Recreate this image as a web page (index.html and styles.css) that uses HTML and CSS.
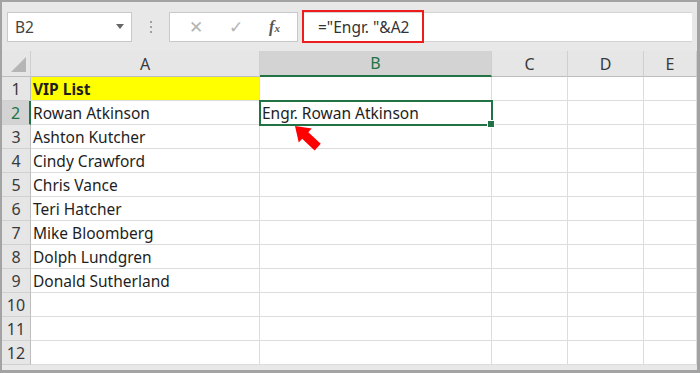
FILE: index.html
```html
<!DOCTYPE html>
<html lang="en">

<head>
    <meta charset="UTF-8">
    <title>VIP List</title>
    <link rel="stylesheet" href="styles.css">
</head>

<body>
    <div class="frame">
        <div class="toolbar">
            <div class="namebox">
                <span>B2</span>
                <span class="drop"></span>
            </div>
            <div class="dots"><i></i><i></i><i></i></div>
            <div class="buttons">
                <span class="btn">&#x2715;</span>
                <span class="btn">&#x2713;</span>
                <span class="btn fx">f<sub>x</sub></span>
            </div>
            <div class="formula">
                <span class="mark">="Engr. "&amp;A2</span>
            </div>
        </div>

        <div class="sheet">
            <div class="hd corner"><span class="tri"></span></div>
            <div class="hd">A</div>
            <div class="hd on-col">B</div>
            <div class="hd">C</div>
            <div class="hd">D</div>
            <div class="hd">E</div>

            <div class="rh">1</div>
            <div class="c yellow"><b>VIP List</b></div>
            <div class="c"></div><div class="c"></div><div class="c"></div><div class="c"></div>

            <div class="rh on-row">2</div>
            <div class="c">Rowan Atkinson</div>
            <div class="c sel">Engr. Rowan Atkinson<span class="handle"></span></div>
            <div class="c"></div><div class="c"></div><div class="c"></div>

            <div class="rh">3</div>
            <div class="c">Ashton Kutcher</div>
            <div class="c"></div><div class="c"></div><div class="c"></div><div class="c"></div>

            <div class="rh">4</div>
            <div class="c">Cindy Crawford</div>
            <div class="c"></div><div class="c"></div><div class="c"></div><div class="c"></div>

            <div class="rh">5</div>
            <div class="c">Chris Vance</div>
            <div class="c"></div><div class="c"></div><div class="c"></div><div class="c"></div>

            <div class="rh">6</div>
            <div class="c">Teri Hatcher</div>
            <div class="c"></div><div class="c"></div><div class="c"></div><div class="c"></div>

            <div class="rh">7</div>
            <div class="c">Mike Bloomberg</div>
            <div class="c"></div><div class="c"></div><div class="c"></div><div class="c"></div>

            <div class="rh">8</div>
            <div class="c">Dolph Lundgren</div>
            <div class="c"></div><div class="c"></div><div class="c"></div><div class="c"></div>

            <div class="rh">9</div>
            <div class="c">Donald Sutherland</div>
            <div class="c"></div><div class="c"></div><div class="c"></div><div class="c"></div>

            <div class="rh">10</div>
            <div class="c"></div><div class="c"></div><div class="c"></div><div class="c"></div><div class="c"></div>

            <div class="rh">11</div>
            <div class="c"></div><div class="c"></div><div class="c"></div><div class="c"></div><div class="c"></div>

            <div class="rh">12</div>
            <div class="c"></div><div class="c"></div><div class="c"></div><div class="c"></div><div class="c"></div>

            <!-- red pointer over B2 -->
            <svg class="arrow" width="40" height="40" viewBox="0 0 40 40">
                <polygon transform="translate(5,3) rotate(223)"
                    points="-31,-4.5 -14,-4.5 -14,-9.5 0,0 -14,9.5 -14,4.5 -31,4.5" fill="#ff0000" />
            </svg>
        </div>
    </div>
</body>

</html>
```

FILE: styles.css
```css
body {
    margin: 0;
    font-family: "Noto Sans", "Open Sans", sans-serif;
    color: #222;
}

.frame {
    width: 700px;
    height: 373px;
    box-sizing: border-box;
    border: 2px solid #a3a3a3;
    border-right-width: 3px;
    border-bottom-width: 3px;
    overflow: hidden;
    background: #e8e8e8;
}

/* formula bar */
.toolbar {
    height: 49px;
    display: flex;
    align-items: center;
    padding-left: 5px;
    box-sizing: border-box;
}

.namebox {
    width: 125px;
    height: 30px;
    box-sizing: border-box;
    background: #fff;
    border: 1px solid #c9c9c9;
    display: flex;
    align-items: center;
    justify-content: space-between;
    padding: 0 7px 0 7px;
    font-size: 15.5px;
    color: #444;
}

.drop {
    width: 0;
    height: 0;
    border-left: 4px solid transparent;
    border-right: 4px solid transparent;
    border-top: 5px solid #666;
}

.dots {
    width: 37px;
    display: flex;
    flex-direction: column;
    align-items: center;
    gap: 3px;
}

.dots i {
    width: 2px;
    height: 2px;
    background: #a0a0a0;
}

.buttons {
    width: 129px;
    height: 30px;
    box-sizing: border-box;
    background: #fff;
    border: 1px solid #c9c9c9;
    display: flex;
    align-items: center;
    justify-content: space-around;
    padding: 0 4px 0 6px;
    font-size: 17px;
    color: #b4b4b4;
}

.fx {
    font-family: "Liberation Serif", serif;
    font-style: italic;
    font-weight: bold;
    font-size: 16px;
    color: #555;
}

.fx sub {
    font-size: 11px;
    vertical-align: 0;
}

.formula {
    flex: 1;
    height: 30px;
    margin-left: 4px;
    margin-right: 5px;
    background: #fff;
    border-top: 1px solid #d4d4d4;
    border-bottom: 1px solid #d4d4d4;
    box-sizing: border-box;
    display: flex;
    align-items: center;
}

.mark {
    height: 33px;
    box-sizing: border-box;
    border: 2px solid #ee1c1c;
    padding: 0 13px 0 14px;
    display: flex;
    align-items: center;
    font-size: 15.5px;
    color: #333;
}

/* grid */
.sheet {
    position: relative;
    display: grid;
    grid-template-columns: 29px 229px 232px 76px 76px 1fr;
    grid-template-rows: 26px;
    grid-auto-rows: 24px;
    background: #fff;
    font-size: 15.5px;
}

.sheet > div {
    box-sizing: border-box;
    border-right: 1px solid #dcdcdc;
    border-bottom: 1px solid #dcdcdc;
}

.hd {
    background: #e6e6e6;
    color: #3a3a3a;
    font-size: 16px;
    display: flex;
    align-items: center;
    justify-content: center;
    border-right-color: #cfcfcf !important;
    border-bottom-color: #bdbdbd !important;
}

.corner {
    position: relative;
}

.tri {
    position: absolute;
    right: 4px;
    bottom: 4px;
    width: 0;
    height: 0;
    border-left: 15px solid transparent;
    border-bottom: 15px solid #b5b5b5;
}

.on-col {
    background: #d3d3d3;
    color: #217346;
    border-bottom: 2px solid #217346 !important;
}

.rh {
    background: #e6e6e6;
    color: #3a3a3a;
    font-size: 16px;
    display: flex;
    align-items: center;
    justify-content: center;
    border-right-color: #bdbdbd !important;
    border-bottom-color: #d0d0d0 !important;
}

.on-row {
    background: #d3d3d3;
    color: #217346;
    border-right: 2px solid #217346 !important;
}

.c {
    display: flex;
    align-items: center;
    padding-left: 2px;
    white-space: nowrap;
    color: #1e1e1e;
}

.yellow {
    background: #ffff00;
}

.sel {
    position: relative;
    outline: 2px solid #217346;
    outline-offset: -1px;
}

.handle {
    position: absolute;
    right: -4px;
    bottom: -4px;
    width: 6px;
    height: 6px;
    background: #217346;
    border: 1px solid #fff;
}

.arrow {
    position: absolute;
    left: 288px;
    top: 72px;
}
```
